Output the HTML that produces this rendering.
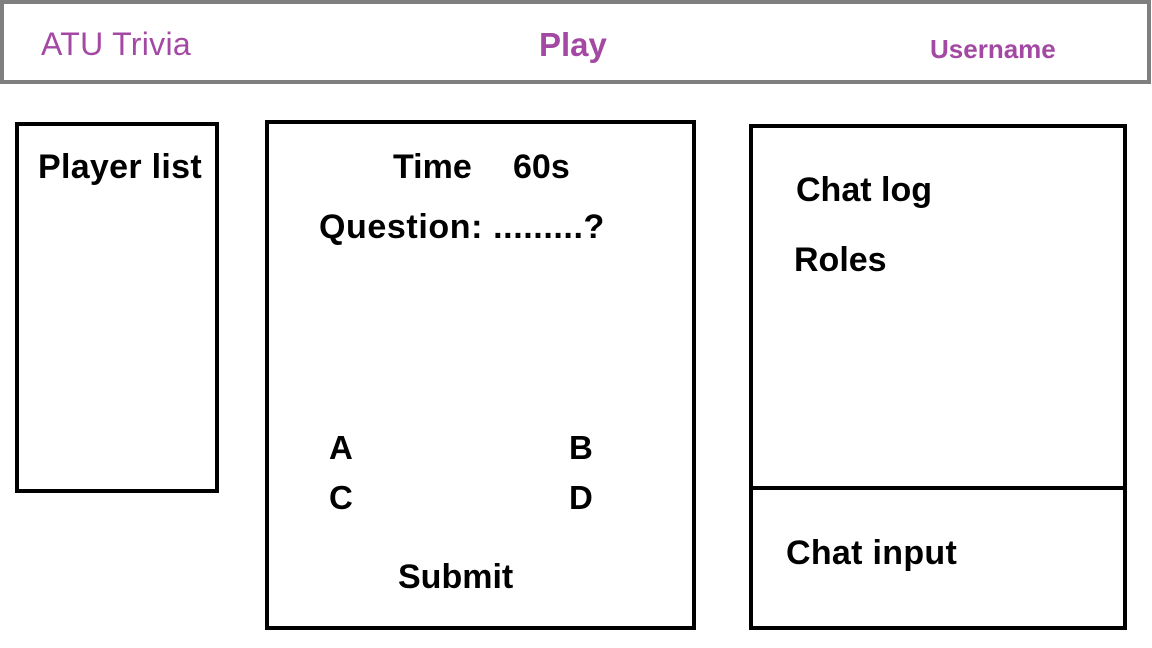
<!DOCTYPE html>
<html><head><style>
body{margin:0;width:1152px;height:648px;background:#fff;position:relative;overflow:hidden;font-family:"Liberation Sans",sans-serif;}
.b{position:absolute;box-sizing:border-box;}
.t{position:absolute;line-height:1;white-space:nowrap;font-weight:bold;color:#000;}
.p{color:#a349a4;}
</style></head><body>
<div class="b" style="left:0;top:0;width:1151px;height:84px;border:4px solid #7f7f7f;"></div>
<div class="b" style="left:15px;top:122px;width:204px;height:371px;border:4px solid #000;"></div>
<div class="b" style="left:265px;top:120px;width:431px;height:510px;border:4px solid #000;"></div>
<div class="b" style="left:749px;top:124px;width:378px;height:506px;border:4px solid #000;"></div>
<div class="b" style="left:749px;top:486px;width:378px;height:4px;background:#000;"></div>

<span class="t p" style="left:41px;top:28px;font-size:32px;font-weight:normal;letter-spacing:0.3px;">ATU Trivia</span>
<span class="t p" style="left:539px;top:28px;font-size:33px;">Play</span>
<span class="t p" style="left:930px;top:36px;font-size:26px;">Username</span>

<span class="t" style="left:38px;top:150px;font-size:34px;letter-spacing:0.3px;">Player list</span>
<span class="t" style="left:393px;top:150px;font-size:34px;">Time</span>
<span class="t" style="left:513px;top:150px;font-size:34px;">60s</span>
<span class="t" style="left:319px;top:210px;font-size:34px;letter-spacing:0.6px;">Question: .........?</span>
<span class="t" style="left:329px;top:431px;font-size:33px;">A</span>
<span class="t" style="left:569px;top:431px;font-size:33px;">B</span>
<span class="t" style="left:329px;top:481px;font-size:33px;">C</span>
<span class="t" style="left:569px;top:481px;font-size:33px;">D</span>
<span class="t" style="left:398px;top:560px;font-size:34px;">Submit</span>
<span class="t" style="left:796px;top:173px;font-size:34px;">Chat log</span>
<span class="t" style="left:794px;top:243px;font-size:34px;">Roles</span>
<span class="t" style="left:786px;top:536px;font-size:34px;letter-spacing:0.3px;">Chat input</span>
</body></html>
